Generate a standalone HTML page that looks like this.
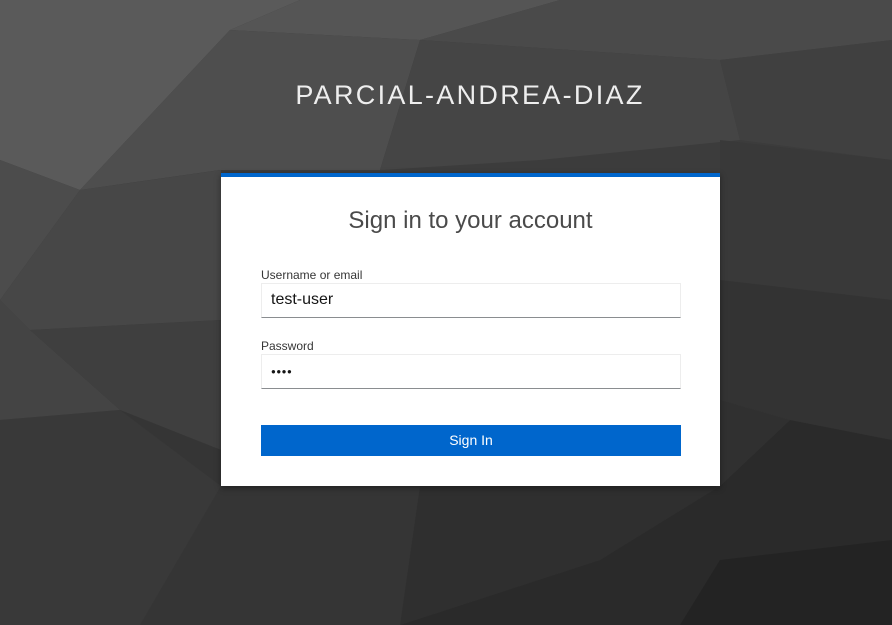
<!DOCTYPE html>
<html><head><meta charset="utf-8"><style>
html,body{margin:0;width:892px;height:625px;overflow:hidden;font-family:"Liberation Sans",sans-serif;}
body{background:#3c3c3c;position:relative}
svg.bg{position:absolute;left:0;top:0}
.title{position:absolute;top:80px;left:220px;width:500px;text-align:center;color:#eee;font-size:27px;letter-spacing:2.3px;}
.card{position:absolute;left:221px;top:173px;width:499px;height:313px;background:#fff;border-top:4px solid #0066cc;box-sizing:border-box;box-shadow:0 2px 6px rgba(0,0,0,.4)}
.h{position:absolute;top:30px;width:100%;text-align:center;font-size:24px;color:#4a4a4a}
.lbl{position:absolute;left:40px;font-size:12px;color:#363636}
.inp{position:absolute;left:40px;width:420px;height:35px;box-sizing:border-box;border:1px solid #ededed;border-bottom:1px solid #8a8d90;font-size:16px;color:#151515;padding:7px 9px}
.btn{position:absolute;left:40px;top:248px;width:420px;height:31px;background:#0066cc;color:#fff;font-size:14px;text-align:center;line-height:31px}
</style></head><body>
<svg class="bg" width="892" height="625" viewBox="0 0 892 625">
<polygon points="0,0 300,0 230,30 80,190 0,160" fill="#5a5a5a"/>
<polygon points="300,0 560,0 420,40 230,30" fill="#555"/>
<polygon points="560,0 892,0 892,40 720,60 420,40" fill="#4a4a4a"/>
<polygon points="230,30 420,40 380,170 220,170 80,190" fill="#4e4e4e"/>
<polygon points="420,40 720,60 740,140 540,160 380,170" fill="#454545"/>
<polygon points="720,60 892,40 892,160 740,140" fill="#404040"/>
<polygon points="0,160 80,190 0,300" fill="#4c4c4c"/>
<polygon points="80,190 221,170 221,320 30,330 0,300" fill="#474747"/>
<polygon points="0,300 30,330 120,410 0,420" fill="#444"/>
<polygon points="30,330 221,320 221,450 120,410" fill="#3f3f3f"/>
<polygon points="720,140 892,160 892,300 720,280" fill="#393939"/>
<polygon points="720,280 892,300 892,440 790,420 720,400" fill="#333"/>
<polygon points="0,420 120,410 221,486 140,625 0,625" fill="#393939"/>
<polygon points="120,410 221,450 221,486" fill="#353535"/>
<polygon points="221,486 420,486 400,625 140,625" fill="#353535"/>
<polygon points="420,486 720,486 600,560 400,625" fill="#2f2f2f"/>
<polygon points="600,560 720,486 790,420 892,440 892,625 400,625" fill="#2a2a2a"/>
<polygon points="720,400 790,420 720,486" fill="#303030"/>
<polygon points="720,560 892,540 892,625 680,625" fill="#232323"/>
</svg>
<div class="title">PARCIAL-ANDREA-DIAZ</div>
<div class="card">
<div class="h">Sign in to your account</div>
<div class="lbl" style="top:91px">Username or email</div>
<div class="inp" style="top:106px">test-user</div>
<div class="lbl" style="top:162px">Password</div>
<div class="inp" style="top:177px;font-size:8px;padding-top:12px;letter-spacing:0.5px">●●●●</div>
<div class="btn">Sign In</div>
</div>
</body></html>
